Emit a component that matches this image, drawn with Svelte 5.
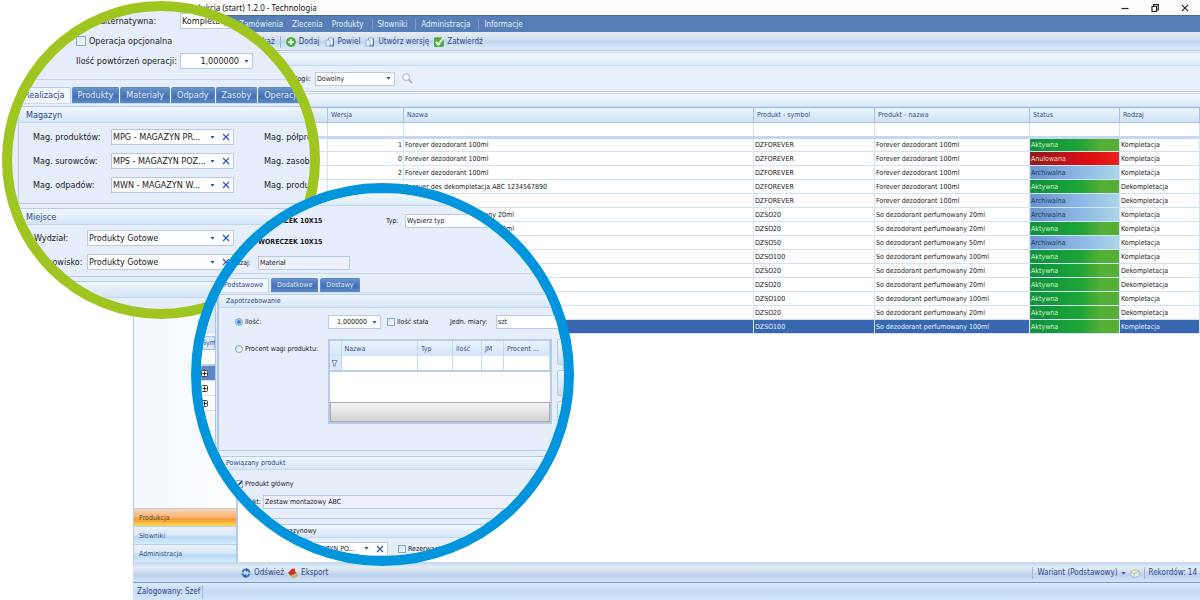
<script lang="ts">
  type Status = 'Aktywna' | 'Anulowana' | 'Archiwalna';

  const menu = [
    { label: 'Zamówienia' },
    { label: 'Zlecenia' },
    { label: 'Produkty' },
    { label: 'Słowniki', sep: true },
    { label: 'Administracja', sep: true },
    { label: 'Informacje', sep: true }
  ];

  const rows: { ver: number; name: string; symbol: string; product: string; status: Status; kind: string }[] = [
    { ver: 1, name: 'Forever dezodorant 100ml', symbol: 'DZFOREVER', product: 'Forever dezodorant 100ml', status: 'Aktywna', kind: 'Kompletacja' },
    { ver: 0, name: 'Forever dezodorant 100ml', symbol: 'DZFOREVER', product: 'Forever dezodorant 100ml', status: 'Anulowana', kind: 'Kompletacja' },
    { ver: 2, name: 'Forever dezodorant 100ml', symbol: 'DZFOREVER', product: 'Forever dezodorant 100ml', status: 'Archiwalna', kind: 'Kompletacja' },
    { ver: 1, name: 'Forever des dekompletacja ABC 1234567890', symbol: 'DZFOREVER', product: 'Forever dezodorant 100ml', status: 'Aktywna', kind: 'Dekompletacja' },
    { ver: 0, name: 'Forever des', symbol: 'DZFOREVER', product: 'Forever dezodorant 100ml', status: 'Archiwalna', kind: 'Dekompletacja' },
    { ver: 0, name: 'So dezodorant perfumowany 20ml', symbol: 'DZSO20', product: 'So dezodorant perfumowany 20ml', status: 'Archiwalna', kind: 'Kompletacja' },
    { ver: 1, name: 'So dezodorant perfumowany 20ml', symbol: 'DZSO20', product: 'So dezodorant perfumowany 20ml', status: 'Aktywna', kind: 'Kompletacja' },
    { ver: 0, name: 'So dezodorant perfumowany 50ml', symbol: 'DZSO50', product: 'So dezodorant perfumowany 50ml', status: 'Archiwalna', kind: 'Kompletacja' },
    { ver: 1, name: 'So dezodorant perfumowany 100ml', symbol: 'DZSO100', product: 'So dezodorant perfumowany 100ml', status: 'Aktywna', kind: 'Kompletacja' },
    { ver: 1, name: 'So dezodorant perfumowany 20ml', symbol: 'DZSO20', product: 'So dezodorant perfumowany 20ml', status: 'Aktywna', kind: 'Dekompletacja' },
    { ver: 2, name: 'So dezodorant perfumowany 20ml', symbol: 'DZSO20', product: 'So dezodorant perfumowany 20ml', status: 'Aktywna', kind: 'Dekompletacja' },
    { ver: 2, name: 'So dezodorant perfumowany 100ml', symbol: 'DZSO100', product: 'So dezodorant perfumowany 100ml', status: 'Aktywna', kind: 'Kompletacja' },
    { ver: 3, name: 'So dezodorant perfumowany 20ml', symbol: 'DZSO20', product: 'So dezodorant perfumowany 20ml', status: 'Aktywna', kind: 'Dekompletacja' },
    { ver: 3, name: 'So dezodorant perfumowany 100ml', symbol: 'DZSO100', product: 'So dezodorant perfumowany 100ml', status: 'Aktywna', kind: 'Kompletacja' }
  ];
  let selected = $state(13);

  const navItems = ['Produkcja', 'Słowniki', 'Administracja'];
  let nav = $state('Produkcja');

  const opTabs = ['Realizacja', 'Produkty', 'Materiały', 'Odpady', 'Zasoby', 'Operacje'];
  let opTab = $state('Realizacja');

  const stores = [
    { id: 'mag-prod', label: 'Mag. produktów:', value: 'MPG - MAGAZYN PR...', next: 'Mag. półproduktów:' },
    { id: 'mag-sur', label: 'Mag. surowców:', value: 'MPS - MAGAZYN POZ...', next: 'Mag. zasobów:' },
    { id: 'mag-odp', label: 'Mag. odpadów:', value: 'MWN - MAGAZYN W...', next: 'Mag. produkcji:' }
  ];
  const places = [
    { id: 'wydzial', label: 'Wydział:', value: 'Produkty Gotowe' },
    { id: 'stanowisko', label: 'Stanowisko:', value: 'Produkty Gotowe' }
  ];

  const matTabs = ['Podstawowe', 'Dodatkowe', 'Dostawy'];
  let matTab = $state('Podstawowe');
  let demand = $state('ilosc');
</script>

{#snippet caret()}
  <svg class="caret" viewBox="0 0 5 3" aria-hidden="true"><path d="M.3 0h4.400L2.500 2.700z" fill="#2d5fae" /></svg>
{/snippet}

{#snippet combo(id: string, value: string, clearable: boolean)}
  <div class="box">
    <select {id}><option>{value}</option></select>
    {@render caret()}
    {#if clearable}
      <button class="clear" type="button" aria-label="Wyczyść">
        <svg viewBox="0 0 8 8"><path d="M1 1l6 6M7 1L1 7" stroke="#2d5fae" stroke-width="1.3" /></svg>
      </button>
    {/if}
  </div>
{/snippet}

{#snippet sheets()}
  <svg class="ico" viewBox="0 0 10 10" aria-hidden="true">
    <path d="M3.500 1h4.500v7h-4.500z" fill="#fff" stroke="#7d9cc6" stroke-width=".9" />
    <path d="M1 3h4v6h-4z" fill="#e6eef8" stroke="#8da9cd" stroke-width=".8" />
    <path d="M8.500 1.500v7.500H5" fill="none" stroke="#4b6f9f" stroke-width=".9" />
  </svg>
{/snippet}

<div class="page">
  <div class="window">
    <header class="titlebar">
      <h1>Produkcja (start) 1.2.0 - Technologia</h1>
      <div class="winbtns">
        <button type="button" aria-label="Minimalizuj"><svg viewBox="0 0 10 10"><path d="M1.500 5.500h7" stroke="#222" stroke-width="1.200" /></svg></button>
        <button type="button" aria-label="Przywróć"><svg viewBox="0 0 10 10"><path d="M2 3.500h4.500V8.500H2zM3.500 3.500V1.700H8.300V7H6.500" fill="none" stroke="#222" stroke-width="1.200" /></svg></button>
        <button type="button" aria-label="Zamknij"><svg viewBox="0 0 10 10"><path d="M1.800 1.800l6.400 6.400M8.200 1.800L1.800 8.200" stroke="#222" stroke-width="1.100" /></svg></button>
      </div>
    </header>

    <nav class="menubar">
      {#each menu as item}
        <a href="#menu" class:sep={item.sep}>{item.label}</a>
      {/each}
    </nav>

    <div class="toolbar top">
      <button type="button">Pokaż</button>
      <span class="vsep"></span>
      <button type="button">
        <svg class="ico" viewBox="0 0 10 10"><circle cx="5" cy="5" r="4.800" fill="#3a9d2c" /><circle cx="5" cy="4.500" r="3.800" fill="#55b944" /><path d="M5 2.200v5.600M2.200 5h5.600" stroke="#fff" stroke-width="1.700" /></svg>
        Dodaj
      </button>
      <button type="button">{@render sheets()}Powiel</button>
      <button type="button">{@render sheets()}Utwórz wersję</button>
      <button type="button">
        <svg class="ico" viewBox="0 0 10 10"><rect x=".3" y=".8" width="9" height="9" rx="1" fill="#4bb037" stroke="#2f8a23" stroke-width=".6" /><path d="M2 4.800l2.300 2.800L9.300 .8" fill="none" stroke="#fff" stroke-width="1.900" /></svg>
        Zatwierdź
      </button>
    </div>

    <div class="work">
      <aside class="sidebar">
        {#each navItems as item}
          <button type="button" class:active={nav === item} onclick={() => (nav = item)}>{item}</button>
        {/each}
      </aside>

      <main>
        <div class="band"></div>
        <div class="filter">
          <label for="rodzaj-tech">Rodzaj technologii:</label>
          <div class="kind">{@render combo('rodzaj-tech', 'Dowolny', false)}</div>
          <button type="button" class="search" aria-label="Szukaj">
            <svg viewBox="0 0 12 12"><circle cx="4.500" cy="4.500" r="3.500" fill="#f7fafd" stroke="#b9c3cf" stroke-width="1.200" /><path d="M7 7l4 4" stroke="#a3a9b2" stroke-width="1.600" /></svg>
          </button>
        </div>
        <div class="band"></div>
        <table class="grid">
          <colgroup>
            <col class="c-sym" /><col class="c-ver" /><col /><col class="c-psym" /><col class="c-prod" /><col class="c-stat" /><col class="c-kind" />
          </colgroup>
          <thead>
            <tr><th>Symbol</th><th>Wersja</th><th>Nazwa</th><th>Produkt - symbol</th><th>Produkt - nazwa</th><th>Status</th><th>Rodzaj</th></tr>
            <tr class="search-row">{#each Array(7) as _}<td></td>{/each}</tr>
          </thead>
          <tbody>
            {#each rows as row, i}
              <tr class:selected={selected === i} onclick={() => (selected = i)}>
                <td></td>
                <td class="num">{row.ver}</td>
                <td>{row.name}</td>
                <td>{row.symbol}</td>
                <td>{row.product}</td>
                <td class="status {row.status.toLowerCase()}">{row.status}</td>
                <td>{row.kind}</td>
              </tr>
            {/each}
          </tbody>
        </table>
      </main>
    </div>

    <div class="toolbar bottom">
      <button type="button">
        <svg class="ico" viewBox="0 0 10 10"><circle cx="5" cy="5" r="3.500" fill="none" stroke="#3c78c3" stroke-width="2" /><path d="M5 0l3 2-3 2zM5 6L2 8l3 2z" fill="#2c5ea8" /><path d="M0 4.500l2.500 .5M7.500 5l2.500 .5" stroke="#dbe6f5" stroke-width="1" /></svg>
        Odśwież
      </button>
      <button type="button">
        <svg class="ico" viewBox="0 0 10 10"><path d="M2.500 5.500L8 5l1.500 3-5 2z" fill="#e0b070" stroke="#b58344" stroke-width=".5" /><path d="M0 5L4 .8l3-.3V3.500l1.500 .5-3 3-1-1L3 8z" fill="#c8332a" /></svg>
        Eksport
      </button>
      <span class="grow"></span>
      <span class="vsep"></span>
      <button type="button">Wariant (Podstawowy) {@render caret()}</button>
      <button type="button" aria-label="Układ">
        <svg class="ico" viewBox="0 0 10 10"><path d="M1 3.500L6 1.500l3 1.500v5L4 9.500 1 8z" fill="#eef3ee" stroke="#9db1b5" stroke-width=".7" /><path d="M1 4l3 1.500L9 3.500M4 5.500v4" fill="none" stroke="#8fb4a0" stroke-width=".8" /><path d="M2 2l4 1" stroke="#e1c76a" stroke-width="1.200" /></svg>
      </button>
      <span class="vsep"></span>
      <span class="records">Rekordów: 14</span>
    </div>

    <footer class="statusbar"><span>Zalogowany: Szef</span></footer>
  </div>

  <!-- green magnifier: operation details -->
  <section class="lens operation">
    <div class="op-form">
      <label for="alt">Oper. alternatywna:</label>
      <div class="alt">{@render combo('alt', 'Kompletacja', false)}</div>
      <label class="check optional"><input type="checkbox" />Operacja opcjonalna</label>
      <label for="repeat">Ilość powtórzeń operacji:</label>
      <div class="box"><input id="repeat" class="num" value="1,000000" />{@render caret()}</div>
    </div>
    <div class="tabs" role="tablist">
      {#each opTabs as tab}
        <button type="button" role="tab" aria-selected={opTab === tab} class:active={opTab === tab} onclick={() => (opTab = tab)}>{tab}</button>
      {/each}
    </div>
    <div class="tab-body">
      <div class="group">
        <h2>Magazyn</h2>
        <div class="stores">
          {#each stores as s}
            <label for={s.id}>{s.label}</label>
            {@render combo(s.id, s.value, true)}
            <span>{s.next}</span>
          {/each}
        </div>
      </div>
      <div class="group">
        <h2>Miejsce</h2>
        <div class="places">
          {#each places as p}
            <label for={p.id}>{p.label}</label>
            {@render combo(p.id, p.value, true)}
          {/each}
        </div>
      </div>
      <div class="group rest"><h2></h2></div>
    </div>
  </section>

  <!-- blue magnifier: material details -->
  <section class="lens material">
    <div class="tree">
      <div class="tree-head">Symbol</div>
      <div class="tree-filter"></div>
      {#each [0, 1, 2] as n}
        <div class="node" class:on={n === 0}>
          <svg viewBox="0 0 7 7"><rect x=".5" y=".5" width="6" height="6" rx="1" fill="#fff" stroke="#444" /><path d="M1.500 3.500h4M3.500 1.500v4" stroke="#222" /></svg>
        </div>
      {/each}
    </div>
    <div class="panel">
      <div class="band"></div>
      <div class="mat-form">
        <span>Symbol:</span><b>WORECZEK 10X15</b><label for="typ">Typ:</label>{@render combo('typ', 'Wybierz typ', false)}
        <span>Nazwa:</span><b class="full">WORECZEK 10X15</b>
        <label for="rodzaj">Rodzaj:</label><div class="box off kindbox"><input id="rodzaj" value="Materiał" readonly /></div>
      </div>
      <div class="tabs" role="tablist">
        {#each matTabs as tab}
          <button type="button" role="tab" aria-selected={matTab === tab} class:active={matTab === tab} onclick={() => (matTab = tab)}>{tab}</button>
        {/each}
      </div>
      <div class="tab-body">
        <div class="group">
          <h2>Zapotrzebowanie</h2>
          <div class="demand">
            <div class="line">
              <label class="check key"><input type="radio" bind:group={demand} value="ilosc" />Ilość:</label>
              <div class="box amount"><input class="num" value="1,000000" aria-label="Ilość" />{@render caret()}</div>
              <label class="check const"><input type="checkbox" />Ilość stała</label>
              <label class="unit" for="jm">Jedn. miary:</label>
              <div class="box grow"><input id="jm" value="szt" /></div>
            </div>
            <div class="line top">
              <label class="check key tall"><input type="radio" bind:group={demand} value="procent" />Procent wagi produktu:</label>
              <div class="weights">
                <table>
                  <colgroup><col class="w-mark" /><col /><col class="w-typ" /><col class="w-qty" /><col class="w-jm" /><col class="w-pct" /></colgroup>
                  <thead>
                    <tr><th></th><th>Nazwa</th><th>Typ</th><th>Ilość</th><th>JM</th><th>Procent ...</th></tr>
                  </thead>
                  <tbody>
                    <tr>
                      <td class="mark"><svg viewBox="0 0 7 8"><path d="M1 1.500h5L4.300 4.500v2.500h-1.600v-2.500z" fill="#fff" stroke="#5c83bd" stroke-width=".9" /></svg></td>
                      <td></td><td></td><td></td><td></td><td></td>
                    </tr>
                  </tbody>
                </table>
                <div class="empty"></div>
                <div class="sum"></div>
              </div>
              <div class="side">
                <button type="button" aria-label="Dodaj"></button>
                <button type="button" aria-label="Edytuj"></button>
                <button type="button" aria-label="Usuń"></button>
              </div>
            </div>
          </div>
        </div>
        <div class="group">
          <h2>Powiązany produkt</h2>
          <div class="linked">
            <div class="line"><label class="check"><input type="checkbox" checked />Produkt główny</label></div>
            <div class="line"><label class="prod" for="produkt">Produkt:</label><div class="box off grow"><input id="produkt" value="Zestaw montażowy ABC" readonly /></div></div>
          </div>
        </div>
        <div class="group rest">
          <h2 class="dark">Domyślny stan magazynowy</h2>
          <div class="stock line">
            <label for="mag">Magazyn:</label>
            <div class="mag">{@render combo('mag', 'MPS - MAGAZYN PO...', true)}</div>
            <label class="check"><input type="checkbox" />Rezerwacja</label>
          </div>
        </div>
      </div>
    </div>
  </section>
</div>

<style>
  :global(body) { margin: 0; background: #fff; }

  .page {
    --line: #b4cbea; --navy: #2c4a8c;
    position: relative; min-height: 100vh; padding-left: 133px; box-sizing: border-box; overflow: hidden;
    font-family: 'DejaVu Sans Condensed', 'Noto Sans', sans-serif; font-size: 7px; line-height: 12px; color: #1b1b24;
  }
  .page * { box-sizing: border-box; }
  button, input, select { font: inherit; color: inherit; margin: 0; padding: 0; border: 0; background: none; }
  button { cursor: pointer; }
  svg { display: block; flex: none; }
  .grow { flex: 1; }

  .window { display: flex; flex-direction: column; min-height: 100vh; }

  .titlebar { display: flex; justify-content: space-between; align-items: center; height: 15px; padding-left: 50px; }
  .titlebar h1 { margin: 0; font: 400 8px/15px 'Noto Sans', sans-serif; color: #111; }
  .winbtns { display: flex; gap: 20px; padding-right: 10px; }
  .winbtns svg { width: 10px; height: 10px; }

  .menubar { display: flex; align-items: center; height: 17px; padding-left: 101px; background: #557fb6; border-top: 1px solid #426fa9; font-size: 8px; }
  .menubar a { padding: 0 4px 0 5px; color: #e8f0fa; text-decoration: none; line-height: 11px; }
  .menubar a.sep { margin-left: 4px; border-left: 1px solid #7d9fcb; }

  .toolbar { display: flex; align-items: center; color: var(--navy); font-size: 8px; }
  .toolbar button { display: flex; align-items: center; gap: 3px; }
  .toolbar.top { gap: 5px; height: 19px; padding: 1px 0 0 121px; background: linear-gradient(#e6ebf3, #d3dfef 45%, #bed4f0 50%, #dfecfb); border-bottom: 1px solid #a9c4e8; }
  .toolbar.bottom { gap: 4px; height: 21px; padding: 0 3px 0 108px; background: linear-gradient(#cfe0f5, #e3ebf5 20%, #d2deee 45%, #b9d0ee 55%, #d3e4f8); border-bottom: 1px solid #6f9bd1; border-top: 2px solid #c6daf2; }
  .vsep { width: 1px; height: 12px; background: #9db9dd; }
  .ico { width: 10px; height: 10px; }
  .caret { width: 5px; height: 3px; }

  .work { display: flex; flex: 1; }
  .sidebar { display: flex; flex-direction: column; justify-content: flex-end; width: 105px; border: 1px solid var(--line); border-right-width: 2px; border-bottom: 0; background: linear-gradient(90deg, #f3f8fe, #fdfeff); }
  .sidebar button { height: 18px; padding-left: 5px; text-align: left; color: #31508f; border-top: 1px solid #b7d1ee; background: linear-gradient(#eaf1fa, #dce9f7 45%, #b9daf6 60%, #d4ecfd); }
  .sidebar button.active { background: linear-gradient(#fbd3ae, #f9b57a 45%, #f39d2e 62%, #fdd65c); color: #6a4b33; }

  main { flex: 1; min-width: 0; }
  .band { height: 14px; margin-top: 1px; background: linear-gradient(#f0f7fe, #dcebfa); border-top: 1px solid #c3d8f1; border-bottom: 1px solid #c3d8f1; }
  .filter { display: flex; align-items: center; height: 26px; background: #e6effa; border-bottom: 1px solid var(--line); }
  .filter label { width: 77px; text-align: right; white-space: nowrap; padding-right: 4px; }
  .kind { width: 80px; }
  .search { margin-left: 7px; }
  .search svg { width: 11px; height: 11px; }

  .grid { width: 100%; table-layout: fixed; border-collapse: collapse; }
  .c-sym { width: 89px; }
  .c-ver { width: 76px; }
  .c-psym { width: 121px; }
  .c-prod { width: 155px; }
  .c-stat { width: 90px; }
  .c-kind { width: 80px; }
  .grid th, .grid td { height: 14px; padding: 0 2px 0 1px; overflow: hidden; white-space: nowrap; line-height: 12px; border: 1px solid #d3e3f6; }
  .grid th { height: 15px; padding: 0 3px 1px; text-align: left; font-weight: 400; color: #2f4f96; background: linear-gradient(#eef5fd, #cfe1f6); border-color: #a9c3e6; }
  .grid .search-row td { height: 15px; border-bottom: 3px solid #c5d8ef; }
  .grid .num { text-align: right; padding-right: 1px; }
  .status.aktywna { color: #dcf7c4; background: linear-gradient(90deg, #0e8f41, #1ca436 55%, #56b035 80%); }
  .status.anulowana { color: #ffd9cf; background: linear-gradient(90deg, #8c1c1b, #dd0c12 65%, #ea211b); }
  .status.archiwalna { color: #21355a; background: linear-gradient(90deg, #6a93cf, #8fbbe7 60%, #abd7e8); }
  .grid tr.selected td:not(.status) { background: #3966b1; color: #e8f0ff; }

  .statusbar { display: flex; align-items: center; height: 17px; font-size: 8px; background: linear-gradient(#dfebfa, #c4daf4 45%, #d5e6fa); color: var(--navy); }
  .statusbar span { padding: 0 2px 0 4px; line-height: 14px; border-right: 1px solid #a5bfe2; }

  .box { display: flex; align-items: center; height: 14px; background: #fff; border: 1px solid var(--line); padding: 0 3px 0 1px; }
  .box select, .box input { flex: 1; min-width: 0; width: 100%; height: 100%; appearance: none; outline: 0; }
  .box .num { text-align: right; padding-right: 5px; }
  .box.off { background: #eeeffa; }
  .clear { margin-left: 7px; }
  .clear svg { width: 8px; height: 8px; }

  .check { display: flex; align-items: center; gap: 2px; white-space: nowrap; }
  .check input { appearance: none; flex: none; width: 8px; height: 8px; border: 1px solid #84a9dc; background: linear-gradient(135deg, #cfdff3, #fff); }
  .check input[type='radio'] { border-radius: 50%; }
  .check input[type='radio']:checked { background: radial-gradient(#2f86d6 25%, #a9d0f2 60%); }
  .check input[type='checkbox']:checked { background: linear-gradient(135deg, #fff 40%, #23457f 45%, #23457f 58%, #fff 62%); }

  .tabs { display: flex; gap: 2px; color: #e3edfa; }
  .tabs button { padding: 0 5px; border: 1px solid #5e88c2; border-bottom: 0; border-radius: 2px 2px 0 0; background: linear-gradient(#6b93cb, #4070b5 55%, #5e8ac6); }
  .tabs button.active { color: #2b4b90; background: #f2f7fd; border-color: var(--line); }
  .tab-body { border-top: 1px solid #c9dbf2; padding-top: 2px; display: flex; flex-direction: column; gap: 5px; }
  .group { border: 1px solid var(--line); }
  .group h2 { margin: 0; padding-left: 7px; font-size: inherit; font-weight: 400; color: #2c4a8c; background: linear-gradient(#f0f6fd, #d6e6f8); border-bottom: 1px solid #c3d7ef; }
  .group h2.dark { color: #1b1b24; }

  .lens { position: absolute; overflow: hidden; border-radius: 50%; background: #e5eefa; white-space: nowrap; }

  .operation { left: 2px; top: 1px; width: 318px; height: 318px; border: 10px solid #9fc51f; font-size: 9px; }
  .op-form { display: grid; grid-template-columns: 104px 73px; grid-auto-rows: 20px; align-items: center; height: 69px; padding-left: 64px; border-bottom: 1px solid #c3d6ef; }
  .op-form .alt { width: 90px; }
  .optional { grid-column: span 2; }
  .operation .box { height: 16px; }
  .operation .check { gap: 3px; }
  .operation .check input { width: 10px; height: 10px; }
  .operation .tabs { margin: 7px 0 0 6px; gap: 1px; }
  .operation .tabs button { height: 16px; line-height: 15px; }
  .operation .tab-body { margin: 0 -20px 0 6px; gap: 4px; }
  .operation h2 { height: 16px; line-height: 16px; }
  .stores { display: grid; grid-template-columns: 78px 123px 1fr; grid-auto-rows: 24px; align-items: center; padding: 2px 0 6px 14px; }
  .stores span { padding-left: 30px; }
  .places { display: grid; grid-template-columns: 53px 147px; grid-auto-rows: 24px; align-items: center; padding: 1px 0 2px 15px; }
  .rest { height: 60px; }

  .material { display: flex; left: 191px; top: 183px; width: 383px; height: 383px; border: 10px solid #0095dc; }
  .tree { flex: none; width: 14px; padding-top: 143px; background: linear-gradient(#dce9f8 140px, #f6f6f6 141px); overflow: hidden; color: #2f4f96; }
  .tree-head { height: 14px; border: 1px solid #a9c3e6; background: #dbe8f8; line-height: 12px; }
  .tree-filter { height: 16px; background: #fff; border-bottom: 2px solid #bcd0eb; }
  .node { display: flex; align-items: center; height: 15px; background: #fff; border-bottom: 1px solid #cfe0f4; }
  .node.on { background: #5f87c6; }
  .node svg { width: 7px; height: 7px; }
  .panel { flex: 1; min-width: 0; border-left: 3px double #a9c5ea; }
  .panel .band { height: 13px; margin: 0; }
  .mat-form { display: grid; grid-template-columns: 30px 128px 19px 1fr; grid-auto-rows: 21px; align-items: center; padding: 4px 0 0 10px; border-bottom: 1px solid #c3d6ef; }
  .mat-form .full { grid-column: span 3; }
  .mat-form .kindbox { width: 92px; }
  .material .tabs { margin-top: 4px; }
  .material .tabs button { height: 14px; line-height: 13px; }
  .material .tab-body { padding-top: 1px; }
  .material .group { border-right: 0; }
  .material h2 { height: 13px; line-height: 13px; }
  .demand { padding: 5px 0 23px 16px; display: flex; flex-direction: column; gap: 8px; }
  .line { display: flex; align-items: center; min-height: 18px; }
  .line.top { align-items: flex-start; }
  .key { flex: none; width: 93px; }
  .key.tall { height: 20px; }
  .amount { width: 53px; }
  .const { width: 69px; padding-left: 6px; }
  .unit { width: 46px; }
  .weights { flex: none; width: 224px; height: 85px; display: flex; flex-direction: column; border: 2px solid #b4cbea; }
  .weights table { width: 100%; table-layout: fixed; border-collapse: collapse; border-bottom: 2px solid #b9cfec; background: #fff; }
  .weights th, .weights td { height: 15px; padding: 0 3px; text-align: left; font-weight: 400; color: #2f4f96; border-right: 1px solid #c3d7f0; line-height: 12px; overflow: hidden; }
  .weights th { background: linear-gradient(#eaf3fd, #d3e4f8); }
  .weights .mark { background: #dce9f9; padding: 0 1px; }
  .mark svg { width: 7px; height: 8px; }
  .w-mark { width: 11px; }
  .w-typ { width: 35px; }
  .w-qty { width: 29px; }
  .w-jm { width: 22px; }
  .w-pct { width: 46px; }
  .empty { flex: 1; background: #fff; }
  .sum { height: 20px; border: 1px solid #aaa9a6; background: linear-gradient(#f4f4f4, #d4d4d4); }
  .side { flex: none; display: flex; flex-direction: column; gap: 5px; margin-left: 5px; }
  .side button { width: 24px; height: 26px; border: 1px solid var(--line); border-radius: 2px; background: linear-gradient(#eef5fd, #c9dff6); }
  .linked { padding: 5px 0 7px 16px; }
  .prod { width: 28px; }
  .stock { padding: 3px 0 0 16px; }
  .stock > label:first-child { width: 50px; }
  .mag { width: 103px; margin-right: 10px; }
</style>
